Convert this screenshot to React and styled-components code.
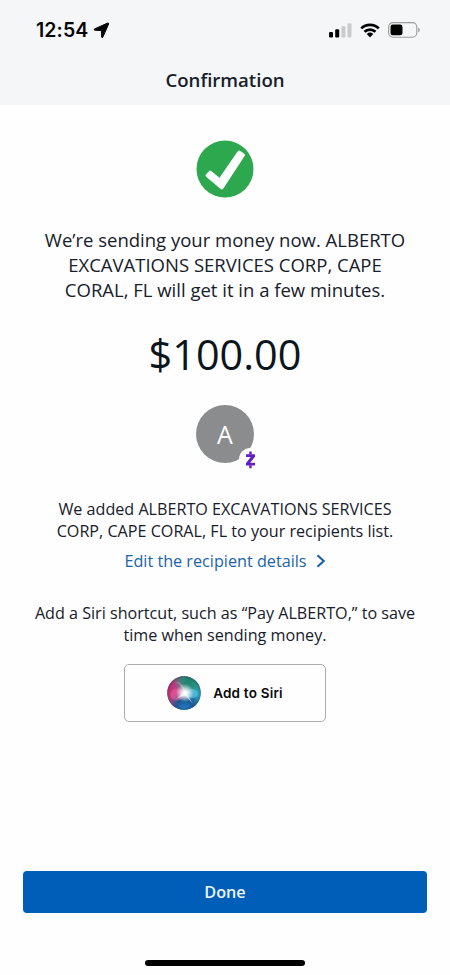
import React from "react";
import styled, { createGlobalStyle } from "styled-components";

const GlobalStyle = createGlobalStyle`
  * {
    box-sizing: border-box;
  }
  body {
    margin: 0;
    background-color: #fefefe;
  }
`;

const StScreen = styled.div`
  width: 450px;
  height: 975px;
  display: flex;
  flex-direction: column;
  align-items: center;
  overflow: hidden;
  background-color: #fefefe;
  color: #17202a;
  font-family: "Open Sans", "Noto Sans", sans-serif;
`;

const StHeader = styled.header`
  width: 100%;
  height: 105px;
  flex-shrink: 0;
  background-color: #f5f6f8;
`;

const StStatusBar = styled.div`
  height: 60px;
  padding: 0 30px 0 36px;
  display: flex;
  align-items: center;
  justify-content: space-between;
`;

const StTime = styled.div`
  display: flex;
  align-items: center;
  gap: 5px;
  color: #050505;
  font-family: Inter, sans-serif;
  font-size: 19.5px;
  font-weight: 600;
  letter-spacing: 0.1px;
`;

const StStatusIcons = styled.div`
  display: flex;
  align-items: center;
  gap: 8px;
`;

const StTitle = styled.h1`
  margin: 7px 0 0;
  font-size: 18.6px;
  font-weight: 550;
  line-height: 26px;
  text-align: center;
`;

const StMain = styled.main`
  width: 100%;
  padding-top: 35px;
  flex: 1;
  display: flex;
  flex-direction: column;
  align-items: center;

  svg {
    display: block;
  }
`;

const StText = styled.p`
  margin: ${({ $top }) => $top}px 0 0;
  font-size: ${({ $size }) => $size}px;
  line-height: ${({ $line }) => $line}px;
  text-align: center;
  white-space: nowrap;
`;

const StAmount = styled(StText)`
  color: #0b151e;
`;

const StAvatar = styled.div`
  position: relative;
  width: 58px;
  height: 58px;
  margin-top: 23px;
  display: flex;
  align-items: center;
  justify-content: center;
  border-radius: 50%;
  background-color: #8b8c8d;
  color: #fff;
  font-size: 25px;
  line-height: 58px;
`;

const StBadge = styled.div`
  position: absolute;
  left: 43px;
  top: 43px;
  width: 23px;
  height: 23px;
  display: flex;
  align-items: center;
  justify-content: center;
  border-radius: 50%;
  background-color: #fefefe;
`;

const StLink = styled.a`
  margin-top: 8px;
  display: flex;
  align-items: center;
  gap: 9px;
  color: #1c63a8;
  font-size: 16.2px;
  line-height: 22px;
  white-space: nowrap;
`;

const StSiriButton = styled.button`
  width: 202px;
  height: 58px;
  margin-top: 18px;
  padding: 0;
  display: flex;
  align-items: center;
  justify-content: center;
  gap: 12px;
  border: 1px solid #acacae;
  border-radius: 5px;
  background-color: #fefefe;
  color: #0a0a0a;
  font-family: Inter, sans-serif;
  font-size: 13.5px;
  font-weight: 600;
  letter-spacing: 0.2px;
`;

const StDoneButton = styled.button`
  width: 404px;
  height: 42px;
  padding: 0;
  flex-shrink: 0;
  border: none;
  border-radius: 4px;
  background-color: #005eb8;
  color: #eef6ff;
  font-family: inherit;
  font-size: 16.2px;
  font-weight: 600;
`;

const StHomeIndicator = styled.div`
  width: 160px;
  height: 6px;
  margin: 47px 0 9px;
  flex-shrink: 0;
  border-radius: 3px;
  background-color: #000;
`;

function LocationIcon() {
  return (
    <svg width="17" height="17" viewBox="0 0 17 17">
      <path
        d="M1.4 7 14.6 1.1q1.5-.4 1 1L9.8 15.2q-.9 1.1-1.1-.2L8.4 9.3q0-.7-.7-.7L1.8 8.2Q.6 7.8 1.4 7Z"
        fill="#050505"
        stroke="#050505"
        strokeWidth="1"
        strokeLinejoin="round"
      />
    </svg>
  );
}

function SignalIcon() {
  return (
    <svg width="23" height="15" viewBox="0 0 23 15">
      <rect x="0" y="9" width="4" height="5.4" rx="1.2" />
      <rect x="6.2" y="6.2" width="4" height="8.2" rx="1.2" />
      <rect x="12.4" y="3.3" width="4" height="11.1" rx="1.2" fill="#c9cacc" />
      <rect x="18.5" y="0.2" width="4" height="14.2" rx="1.2" fill="#c9cacc" />
    </svg>
  );
}

function WifiIcon() {
  return (
    <svg width="20" height="15" viewBox="0 0 20 15">
      <g fill="none" stroke="#000" strokeWidth="2.7">
        <path d="M1.2 5.4a12.6 12.6 0 0 1 17.6 0" />
        <path d="M4.5 8.8a7.9 7.9 0 0 1 11 0" />
      </g>
      <path d="M6.8 11.1a4.7 4.7 0 0 1 6.4 0L10 14.4Z" />
    </svg>
  );
}

function BatteryIcon() {
  return (
    <svg width="32" height="16" viewBox="0 0 32 16">
      <rect
        x="0.6"
        y="0.6"
        width="28.2"
        height="14.6"
        rx="4.5"
        fill="none"
        stroke="#9b9c9e"
        strokeWidth="1.1"
      />
      <rect x="2.5" y="2.5" width="12" height="10.8" rx="2.4" />
      <path d="M30.2 5.5q1.6.8 1.6 2.4t-1.6 2.4Z" fill="#9b9c9e" />
    </svg>
  );
}

function CheckIcon() {
  return (
    <svg width="58" height="58" viewBox="0 0 58 58">
      <circle cx="29" cy="29" r="28.5" fill="#2ea84f" />
      <path
        d="M10.2 34.8 13 31.5q.9-1 2-.2l8.6 7L41.9 11.6q.8-1.2 2-.4l4 2.6q1.2.8.4 2L27 48.4q-.9 1.4-2.2.3L10.4 36.6q-1-.8-.2-1.8Z"
        fill="#fff"
        stroke="#fff"
        strokeWidth="0.8"
      />
    </svg>
  );
}

function ZelleIcon() {
  return (
    <svg width="11" height="18" viewBox="0 0 11 18">
      <g fill="#6421c2">
        <path d="M1 3.3h9v2.4L5.2 11.8H10v2.8H.9v-2.4L5.7 6.1H1Z" />
        <path d="M4.2.6h2.5v3H4.2ZM4.2 14.3h2.5v3H4.2Z" />
      </g>
    </svg>
  );
}

function SiriIcon() {
  return (
    <svg width="34" height="34" viewBox="0 0 34 34">
      <defs>
        <linearGradient id="base" x1="0" y1="0.25" x2="1" y2="0.65">
          <stop offset="0" stopColor="#b92369" />
          <stop offset="0.36" stopColor="#d0488c" />
          <stop offset="0.64" stopColor="#3aa4ac" />
          <stop offset="1" stopColor="#2aa0c4" />
        </linearGradient>
        <radialGradient id="green" cx="0.65" cy="0.08" r="0.5">
          <stop offset="0" stopColor="#15856a" />
          <stop offset="0.5" stopColor="#218b77" stopOpacity="0.85" />
          <stop offset="1" stopColor="#218b77" stopOpacity="0" />
        </radialGradient>
        <radialGradient id="blue" cx="0.52" cy="0.96" r="0.55">
          <stop offset="0" stopColor="#1f7fca" />
          <stop offset="0.5" stopColor="#17508f" stopOpacity="0.9" />
          <stop offset="1" stopColor="#17508f" stopOpacity="0" />
        </radialGradient>
        <radialGradient id="glow" cx="0.53" cy="0.5" r="0.27">
          <stop offset="0" stopColor="#fff" />
          <stop offset="0.3" stopColor="#fff" stopOpacity="0.85" />
          <stop offset="1" stopColor="#fff" stopOpacity="0" />
        </radialGradient>
        <radialGradient id="rim" cx="0.5" cy="0.5" r="0.5">
          <stop offset="0.85" stopColor="#31475c" stopOpacity="0" />
          <stop offset="1" stopColor="#31475c" stopOpacity="0.5" />
        </radialGradient>
      </defs>
      <circle cx="17" cy="17" r="16.8" fill="url(#base)" />
      <circle cx="17" cy="17" r="16.8" fill="url(#green)" />
      <circle cx="17" cy="17" r="16.8" fill="url(#blue)" />
      <ellipse cx="10" cy="18.5" rx="6.5" ry="6" fill="#f05fa0" opacity="0.5" />
      <ellipse cx="25" cy="17.5" rx="6" ry="4.5" fill="#5bc6ef" opacity="0.6" />
      <path d="M18 17Q13 7 8 6q9-1 10 11Z" fill="#eab5d0" opacity="0.4" />
      <path d="m18 15 8 13-8-9-9 4Z" fill="#fff" opacity="0.6" />
      <circle cx="17" cy="17" r="16.8" fill="url(#glow)" />
      <circle cx="17" cy="17" r="16.8" fill="url(#rim)" />
    </svg>
  );
}

function ChevronIcon() {
  return (
    <svg width="10" height="14" viewBox="0 0 10 14">
      <path d="m1.5 1.2 6.2 5.8-6.2 5.8" fill="none" stroke="#1c63a8" strokeWidth="2.2" />
    </svg>
  );
}

function Header() {
  return (
    <StHeader>
      <StStatusBar>
        <StTime>
          12:54
          <LocationIcon />
        </StTime>
        <StStatusIcons>
          <SignalIcon />
          <WifiIcon />
          <BatteryIcon />
        </StStatusIcons>
      </StStatusBar>
      <StTitle>Confirmation</StTitle>
    </StHeader>
  );
}

function App() {
  return (
    <StScreen>
      <GlobalStyle />
      <Header />
      <StMain>
        <CheckIcon />
        <StText $top={29} $size={18.5} $line={25}>
          We’re sending your money now. ALBERTO
          <br />
          EXCAVATIONS SERVICES CORP, CAPE
          <br />
          CORAL, FL will get it in a few minutes.
        </StText>
        <StAmount $top={24} $size={41.4} $line={56}>
          $100.00
        </StAmount>
        <StAvatar>
          A
          <StBadge>
            <ZelleIcon />
          </StBadge>
        </StAvatar>
        <StText $top={35} $size={16.15} $line={22}>
          We added ALBERTO EXCAVATIONS SERVICES
          <br />
          CORP, CAPE CORAL, FL to your recipients list.
        </StText>
        <StLink>
          Edit the recipient details
          <ChevronIcon />
        </StLink>
        <StText $top={30} $size={16.15} $line={22}>
          Add a Siri shortcut, such as “Pay ALBERTO,” to save
          <br />
          time when sending money.
        </StText>
        <StSiriButton>
          <SiriIcon />
          Add to Siri
        </StSiriButton>
      </StMain>
      <StDoneButton>Done</StDoneButton>
      <StHomeIndicator />
    </StScreen>
  );
}

export default App;
